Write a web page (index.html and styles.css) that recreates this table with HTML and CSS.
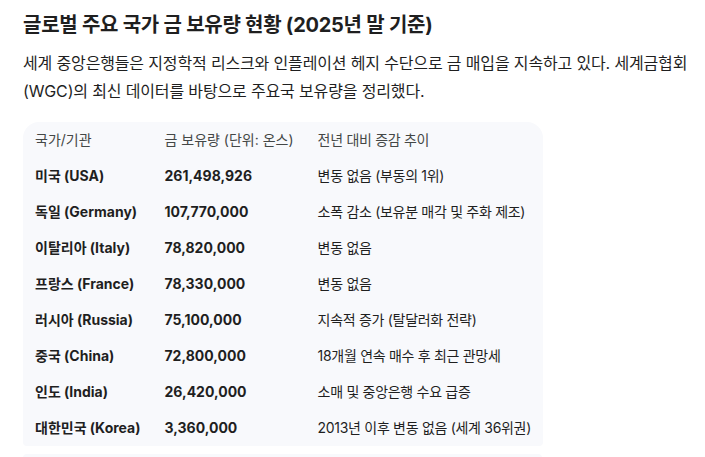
FILE: index.html
```html
<!DOCTYPE html>
<html lang="ko">
<head>
<meta charset="utf-8">
<link rel="stylesheet" href="styles.css">
</head>
<body>
<main class="answer">
  <h2 class="title">글로벌 주요 국가 금 보유량 현황 (2025년 말 기준)</h2>
  <p class="lead">세계 중앙은행들은 지정학적 리스크와 인플레이션 헤지 수단으로 금 매입을 지속하고 있다. 세계금협회(WGC)의 최신 데이터를 바탕으로 주요국 보유량을 정리했다.</p>
  <div class="table-card">
    <table class="gold">
      <thead>
        <tr><th>국가/기관</th><th>금 보유량 (단위: 온스)</th><th class="trend">전년 대비 증감 추이</th></tr>
      </thead>
      <tbody>
        <tr><td class="b">미국 (USA)</td><td class="b">261,498,926</td><td class="trend">변동 없음 (부동의 1위)</td></tr>
        <tr><td class="b">독일 (Germany)</td><td class="b">107,770,000</td><td class="trend">소폭 감소 (보유분 매각 및 주화 제조)</td></tr>
        <tr><td class="b">이탈리아 (Italy)</td><td class="b">78,820,000</td><td class="trend">변동 없음</td></tr>
        <tr><td class="b">프랑스 (France)</td><td class="b">78,330,000</td><td class="trend">변동 없음</td></tr>
        <tr><td class="b">러시아 (Russia)</td><td class="b">75,100,000</td><td class="trend">지속적 증가 (탈달러화 전략)</td></tr>
        <tr><td class="b">중국 (China)</td><td class="b">72,800,000</td><td class="trend">18개월 연속 매수 후 최근 관망세</td></tr>
        <tr><td class="b">인도 (India)</td><td class="b">26,420,000</td><td class="trend">소매 및 중앙은행 수요 급증</td></tr>
        <tr><td class="b">대한민국 (Korea)</td><td class="b">3,360,000</td><td class="trend">2013년 이후 변동 없음 (세계 36위권)</td></tr>
      </tbody>
    </table>
  </div>
  <div class="table-card next"></div>
</main>
</body>
</html>
```

FILE: styles.css
```css
html, body {
  margin: 0;
  padding: 0;
  background: #ffffff;
}
body {
  font-family: "Inter", "Noto Sans CJK KR", sans-serif;
  color: #1f1f1f;
}
.answer {
  padding: 11px 0 0 23px;
}
.title {
  margin: 0;
  font-size: 20px;
  line-height: 28px;
  font-weight: 700;
  letter-spacing: -0.25px;
  color: #1f1f1f;
}
.lead {
  margin: 10px 0 0;
  font-size: 16px;
  line-height: 28px;
  letter-spacing: -0.15px;
  color: #1f1f1f;
}
.table-card {
  display: inline-block;
  margin-top: 17px;
  background: #f8f9fc;
  border-radius: 16px 16px 4px 4px;
}
.table-card.next {
  display: block;
  width: 519px;
  height: 20px;
  margin-top: 4px;
  border-radius: 4px 4px 0 0;
}
.gold {
  border-collapse: collapse;
  font-size: 14px;
  line-height: 20px;
}
.gold th, .gold td {
  padding: 8px 12px;
  text-align: left;
  white-space: nowrap;
  vertical-align: middle;
}
.gold th {
  font-weight: 400;
  color: #444746;
}
.gold td {
  color: #1f1f1f;
}
.gold td.b {
  font-weight: 700;
}
.gold .trend {
  letter-spacing: -0.3px;
}
```
